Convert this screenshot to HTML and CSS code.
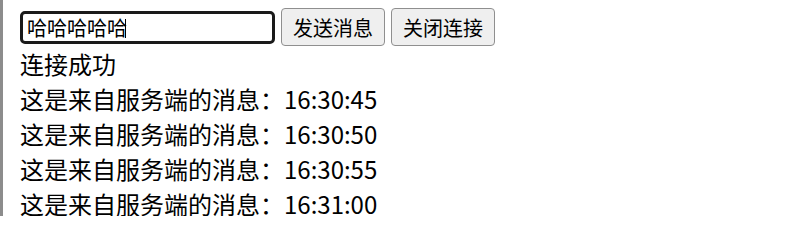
FILE: index.html
```html
<!DOCTYPE html>
<html lang="zh-CN">
<head>
<meta charset="utf-8">
<title>WebSocket</title>
<link rel="stylesheet" href="styles.css">
</head>
<body>
<div class="page">
  <div class="controls">
    <span class="input-wrap">
      <input class="msg-input" type="text" value="哈哈哈哈哈">
      <span class="caret"></span>
    </span>
    <button class="btn btn-send" type="button">发送消息</button>
    <button class="btn" type="button">关闭连接</button>
  </div>
  <div class="log">
    <div class="line">连接成功</div>
    <div class="line">这是来自服务端的消息：16:30:45</div>
    <div class="line">这是来自服务端的消息：16:30:50</div>
    <div class="line">这是来自服务端的消息：16:30:55</div>
    <div class="line">这是来自服务端的消息：16:31:00</div>
  </div>
</div>
</body>
</html>
```
FILE: styles.css
```css
html, body {
  margin: 0;
  padding: 0;
  background: #ffffff;
}
body {
  font-family: "Noto Sans CJK SC", "Noto Sans", sans-serif;
  color: #000;
}
.page {
  height: 216px;
  overflow: hidden;
  box-sizing: border-box;
  border-left: 3px solid #8c8c8c;
  padding: 8px 0 0 17px;
}
.controls {
  display: flex;
  align-items: center;
  height: 38px;
}
.input-wrap {
  position: relative;
  display: block;
  height: 33px;
  margin-right: 6px;
}
.msg-input {
  box-sizing: border-box;
  display: block;
  width: 255px;
  height: 33px;
  margin: 0;
  padding: 0 0 0 4px;
  border: 3px solid #1a1a1a;
  border-radius: 5px;
  outline: none;
  font-family: "Noto Sans CJK SC", sans-serif;
  font-size: 20px;
  color: #000;
  background: #fff;
}
.caret {
  position: absolute;
  left: 105px;
  top: 8px;
  width: 1px;
  height: 19px;
  background: #000;
}
.btn {
  box-sizing: border-box;
  width: 104px;
  height: 38px;
  margin: 0;
  padding: 0;
  border: 1px solid #8f8f8f;
  border-radius: 4px;
  background: #efefef;
  font-family: "Noto Sans CJK SC", sans-serif;
  font-size: 20px;
  color: #000;
}
.btn-send {
  margin-right: 6px;
}
.log {
  margin-top: 0;
}
.line {
  font-size: 24px;
  line-height: 35px;
  height: 35px;
  white-space: nowrap;
}
```
